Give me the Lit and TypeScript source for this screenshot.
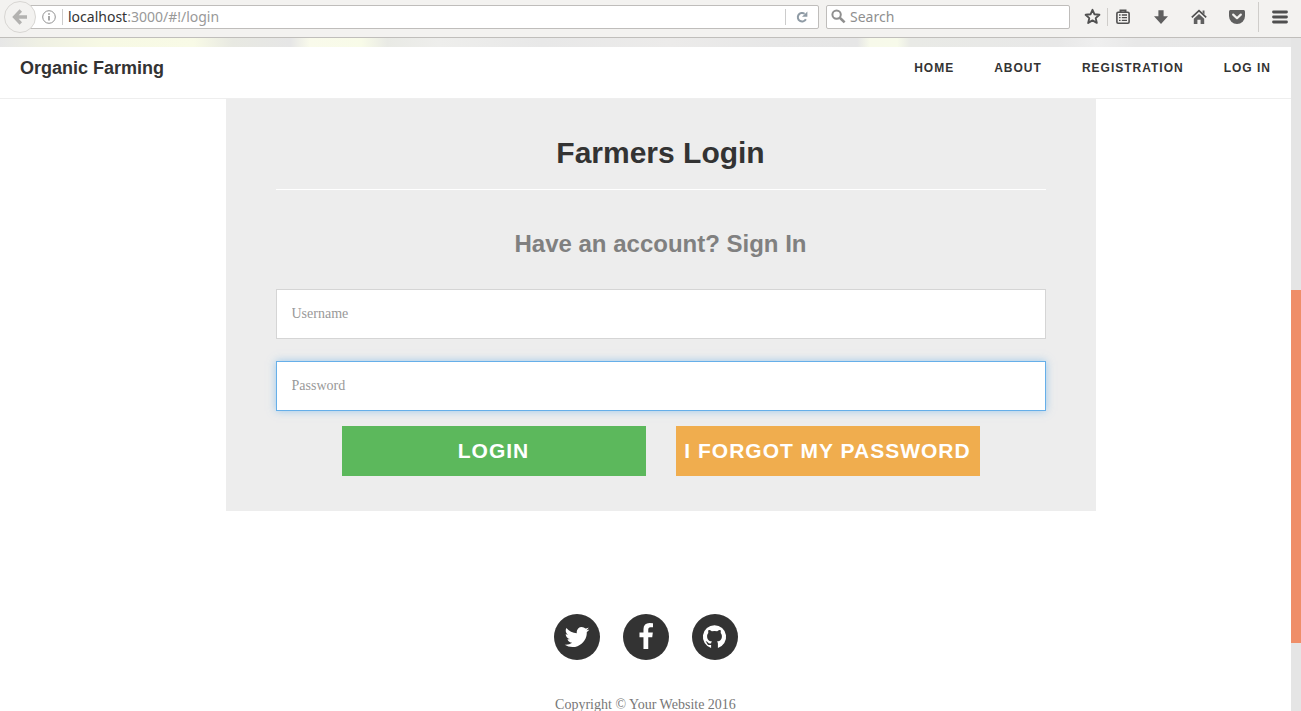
import { LitElement, html, css, svg } from "lit";
import { customElement } from "lit/decorators.js";

@customElement("browser-toolbar")
class BrowserToolbar extends LitElement {
  static styles = css`
    :host {
      display: block;
      font-family: "Noto Sans", sans-serif;
    }
    .bar {
      box-sizing: border-box;
      display: flex;
      align-items: center;
      height: 38px;
      padding: 0 6px 4px 4px;
      background: #f3f2f0;
      border-bottom: 1px solid #c0bebb;
    }
    button {
      display: grid;
      place-items: center;
      padding: 0;
      border: 0;
      background: none;
      flex: none;
    }
    svg {
      display: block;
    }
    .back {
      box-sizing: border-box;
      width: 32px;
      height: 32px;
      margin-right: -8px;
      border: 1px solid #d8d6d3;
      border-radius: 50%;
      background: #f3f2f0;
      z-index: 1;
    }
    .field {
      box-sizing: border-box;
      display: flex;
      align-items: center;
      height: 24px;
      border: 1px solid #bfbdbb;
      border-radius: 2px;
      background: #fff;
      font-size: 14px;
      line-height: 20px;
    }
    .address {
      flex: 1;
      min-width: 0;
      padding: 0 5px 0 13px;
    }
    .divider {
      width: 1px;
      height: 16px;
      margin: 0 5px 0 6px;
      background: #ccc;
      flex: none;
    }
    .url {
      flex: 1;
      color: #999;
      white-space: nowrap;
      overflow: hidden;
    }
    .host {
      color: #333;
    }
    .reload {
      width: 22px;
    }
    .search {
      flex: 0 1 244px;
      min-width: 60px;
      margin: 0 10px 0 7px;
      padding-left: 4px;
      gap: 4px;
    }
    .search input {
      flex: 1;
      min-width: 0;
      padding: 0;
      border: 0;
      outline: 0;
      background: none;
      font: inherit;
    }
    .search input::placeholder {
      color: #8f8f8f;
      opacity: 1;
    }
    .star {
      width: 24px;
    }
    .tools {
      display: flex;
      gap: 8px;
    }
    .tool {
      width: 30px;
      height: 24px;
    }
    .line {
      width: 1px;
      height: 18px;
      margin-left: 3px;
      background: #cfcdca;
    }
    .tall {
      height: 30px;
      margin: 0 6px;
    }
  `;

  render() {
    return html`
      <div class="bar">
        <button class="back" aria-label="Back">
          <svg width="16" height="16" viewBox="0 0 16 16" fill="none" stroke="#b3b2b0" stroke-width="3.4">
            <path d="M8.8 1.5 2.6 8l6.2 6.5M3 8h12" />
          </svg>
        </button>
        <div class="field address">
          <svg width="14" height="14" viewBox="0 0 14 14" fill="none" stroke="#919191">
            <circle cx="7" cy="7" r="6.3" />
            <path d="M7 6v4.5M7 3.2v1.6" stroke-width="1.6" />
          </svg>
          <span class="divider"></span>
          <span class="url"><span class="host">localhost</span>:3000/#!/login</span>
          <span class="divider"></span>
          <button class="reload" aria-label="Reload">
            <svg width="12" height="12" viewBox="0 0 12 12">
              <path d="M8.6 2.7A4.3 4.3 0 1 0 9.9 8.3" fill="none" stroke="#8f9ba5" stroke-width="2" />
              <path d="M11.4.4v5.4H6z" fill="#8f9ba5" />
            </svg>
          </button>
        </div>
        <label class="field search">
          <svg width="15" height="15" viewBox="0 0 15 15" fill="none" stroke="#8f8f8f">
            <circle cx="5.6" cy="5.6" r="4.2" stroke-width="2" />
            <path d="m8.8 8.8 4.8 4.6" stroke-width="2.6" />
          </svg>
          <input type="text" placeholder="Search" aria-label="Search" />
        </label>
        <button class="star" aria-label="Bookmark">
          <svg width="17" height="17" viewBox="0 0 17 17">
            <path
              d="m8.5 1.8 2 4.5 4.9.5-3.7 3.3 1.1 4.8-4.3-2.5-4.3 2.5 1.1-4.8L1.6 6.8l4.9-.5z"
              fill="none" stroke="#505050" stroke-width="1.9" stroke-linejoin="round"
            />
          </svg>
        </button>
        <span class="line"></span>
        <div class="tools">
          <button class="tool" aria-label="Bookmarks list">
            <svg width="16" height="16" viewBox="0 0 16 16">
              <path d="M5.5 3V1.5h5V3" fill="none" stroke="#505050" stroke-width="2" />
              <rect x="1.9" y="3.2" width="12.2" height="11" rx="1.2" fill="none" stroke="#505050" stroke-width="1.6" />
              <path d="M4 6h1.6M4 8.7h1.6M4 11.4h1.6M6.8 6H12M6.8 8.7H12M6.8 11.4H12" stroke="#505050" stroke-width="1.3" />
            </svg>
          </button>
          <button class="tool" aria-label="Downloads">
            <svg width="16" height="16" viewBox="0 0 16 16">
              <path d="M5.4 1.2h5.2v6H15L8 15 1 7.2h4.4z" fill="#5f5f5f" />
            </svg>
          </button>
          <button class="tool" aria-label="Home">
            <svg width="16" height="16" viewBox="0 0 16 16">
              <path d="M.8 8.4 8 1.6l7.2 6.8" fill="none" stroke="#505050" stroke-width="1.7" />
              <path d="M11.6 1.6h1.9v4l-1.9-1.7zM8 4.9l5.2 4.8V15H9.6v-4.3H6.4V15H2.8V9.7z" fill="#606060" />
            </svg>
          </button>
          <button class="tool" aria-label="Pocket">
            <svg width="16" height="16" viewBox="0 0 16 16">
              <path d="M1.6 1h12.8c.9 0 1.6.7 1.6 1.6V7a8 8 0 0 1-16 0V2.6C0 1.7.7 1 1.6 1z" fill="#606060" />
              <path d="m4.2 5.6 3.8 3.6 3.8-3.6" fill="none" stroke="#f3f2f0" stroke-width="2.2" stroke-linecap="round" stroke-linejoin="round" />
            </svg>
          </button>
        </div>
        <span class="line tall"></span>
        <button class="tool" aria-label="Menu">
          <svg width="16" height="14" viewBox="0 0 16 14" stroke="#4f4f4f" stroke-width="2.8" stroke-linecap="round">
            <path d="M1.5 2h13M1.5 7h13M1.5 12h13" />
          </svg>
        </button>
      </div>
    `;
  }
}

const glyphs = {
  Twitter: svg`<path d="M1684 408q-67 98-162 167 1 14 1 42 0 130-38 259.5t-115.5 248.5-184.5 210.5-258 146-323 54.5q-271 0-496-145 35 4 78 4 225 0 401-138-105-2-188-64.5t-114-159.5q33 5 61 5 43 0 85-11-112-23-185.5-111.5t-73.5-205.5v-4q68 38 146 41-66-44-105-115t-39-154q0-88 44-163 121 149 294.5 238.5t371.5 99.5q-8-38-8-74 0-134 94.5-228.5t228.5-94.5q140 0 236 102 109-21 205-78-37 115-142 178 93-10 186-50z" />`,
  Facebook: svg`<path d="M1343 12v264h-157q-86 0-116 36t-30 108v189h293l-39 296h-254v759h-306v-759h-255v-296h255v-218q0-186 104-288.5t277-102.5q147 0 228 12z" />`,
  GitHub: svg`
    <g transform="scale(64)">
      <path d="M13.5 2.3a11.6 11.6 0 0 1 3.4 22.7v-4.2c0-1-.3-1.7-.9-2.2 3.6-.5 4.900-2.300 4.900-5.300 0-1.400-.400-2.400-1.200-3.200.200-1.100.200-2.100-.200-3.100-1.200 0-2.400.600-3.300 1.200a13 13 0 0 0-5.400 0C9.900 7.600 8.700 7 7.500 7c-.4 1-.4 2-.2 3.100-.8.800-1.200 1.800-1.200 3.200 0 3 1.300 4.800 4.900 5.300-.5.400-.8 1-.9 1.700-1.500.6-2.600.200-3.400-1-.6-.9-1.300-1.300-2.300-1.100 1.500.7 1.400 3.600 3.800 3.900h1.900V25A11.600 11.600 0 0 1 13.500 2.300z" />
    </g>`,
};

@customElement("app-root")
class AppRoot extends LitElement {
  static styles = css`
    :host {
      display: flex;
      flex-direction: column;
      height: 100vh;
      overflow: hidden;
      background: #fff;
      color: #333;
      font-family: "Liberation Sans", Arial, sans-serif;
    }
    .window {
      flex: 1;
      min-height: 0;
      display: flex;
    }
    .page {
      flex: 1;
      min-width: 0;
      overflow: hidden;
    }
    .track {
      width: 10px;
      display: grid;
      grid-template-rows: 252fr 353fr 68fr;
      background: #e5e5e5;
    }
    .thumb {
      grid-row: 2;
      background: #ef8e68;
    }
    .photo {
      height: 9px;
      background: linear-gradient(
        90deg,
        #e7e7e7 0%,
        #eff0e4 3%,
        #f7f9e4 8%,
        #f8fae6 15%,
        #e8e9e2 18%,
        #e6e6e6 22.5%,
        #f9faeb 24%,
        #f8fbe8 28%,
        #e9eae5 30%,
        #eeeeec 34%,
        #e8e8e8 42%,
        #ecebea 52%,
        #e7e7e7 60%,
        #e6e6e6 66.4%,
        #f7f9ea 67.4%,
        #f7faea 69.5%,
        #e9eae6 70.5%,
        #e8e8e8 82%,
        #efefef 85%,
        #e8e8e8 88%,
        #e7e7e7 100%
      );
    }
    .nav {
      display: flex;
      justify-content: space-between;
      align-items: flex-start;
      padding: 11px 20px 20px;
      border-bottom: 1px solid #eee;
      line-height: 20px;
      font-weight: bold;
    }
    a {
      color: inherit;
      text-decoration: none;
    }
    .brand {
      font-size: 18px;
    }
    .links {
      display: flex;
      gap: 40px;
      margin: 0;
      padding: 0;
      list-style: none;
      font-size: 12px;
      letter-spacing: 1px;
      text-transform: uppercase;
    }
    .content {
      display: flex;
      justify-content: center;
      padding-left: 30px;
    }
    .card {
      box-sizing: border-box;
      width: 100%;
      max-width: 870px;
      padding: 34px 50px 35px;
      background: #ededed;
      text-align: center;
    }
    h2 {
      margin: 0;
      padding-bottom: 16px;
      border-bottom: 1px solid #fff;
      font-size: 30px;
      line-height: 40px;
    }
    h3 {
      margin: 39px 0 31px;
      color: #808080;
      font-size: 24px;
      line-height: 29px;
    }
    .input {
      box-sizing: border-box;
      display: block;
      width: 100%;
      height: 50px;
      padding: 0 15px;
      border: 1px solid #d5d5d5;
      border-radius: 0;
      outline: 0;
      background: #fff;
      font: 14px "Liberation Serif", serif;
    }
    .input::placeholder {
      color: #999;
      opacity: 1;
    }
    .input + .input {
      margin-top: 22px;
    }
    .input.active {
      border-color: #66afe9;
      box-shadow: 0 0 8px rgba(102, 175, 233, 0.6);
    }
    .actions {
      display: grid;
      grid-template-columns: minmax(0, 304px) minmax(0, 304px);
      justify-content: center;
      gap: 30px;
      margin-top: 15px;
    }
    .action {
      height: 50px;
      padding: 0;
      border: 0;
      color: #fff;
      font: bold 21px "Liberation Sans", Arial, sans-serif;
      letter-spacing: 1px;
      text-transform: uppercase;
      white-space: nowrap;
    }
    .login {
      background: #5cb85c;
    }
    .forgot {
      background: #f0ad4e;
    }
    footer {
      display: flex;
      flex-direction: column;
      align-items: center;
      gap: 35px;
      padding-top: 103px;
    }
    .social {
      display: flex;
      gap: 23px;
    }
    .circle {
      display: grid;
      place-items: center;
      width: 46px;
      height: 46px;
      border-radius: 50%;
      background: #333;
    }
    .circle svg {
      display: block;
      fill: #fff;
    }
    .copyright {
      margin: 0;
      color: #777;
      font: 14px/20px "Liberation Serif", serif;
    }
  `;

  render() {
    return html`
      <browser-toolbar></browser-toolbar>
      <div class="window">
        <div class="page">
          <div class="photo"></div>
          <nav class="nav">
            <a class="brand" href="#!/">Organic Farming</a>
            <ul class="links">
              ${["Home", "About", "Registration", "Log in"].map(
                (name) => html`<li><a href="#!/login">${name}</a></li>`
              )}
            </ul>
          </nav>
          <main class="content">
            <form class="card">
              <h2>Farmers Login</h2>
              <h3>Have an account? Sign In</h3>
              <input class="input" type="text" placeholder="Username" aria-label="Username" />
              <input class="input active" type="password" placeholder="Password" aria-label="Password" />
              <div class="actions">
                <button class="action login" type="button">Login</button>
                <button class="action forgot" type="button">I forgot my password</button>
              </div>
            </form>
          </main>
          <footer>
            <div class="social">
              ${Object.entries(glyphs).map(
                ([name, glyph]) => html`
                  <a class="circle" href="#!/login" aria-label=${name}>
                    <svg width="28" height="28" viewBox="0 0 1792 1792">${glyph}</svg>
                  </a>
                `
              )}
            </div>
            <p class="copyright">Copyright © Your Website 2016</p>
          </footer>
        </div>
        <div class="track"><div class="thumb"></div></div>
      </div>
    `;
  }
}
